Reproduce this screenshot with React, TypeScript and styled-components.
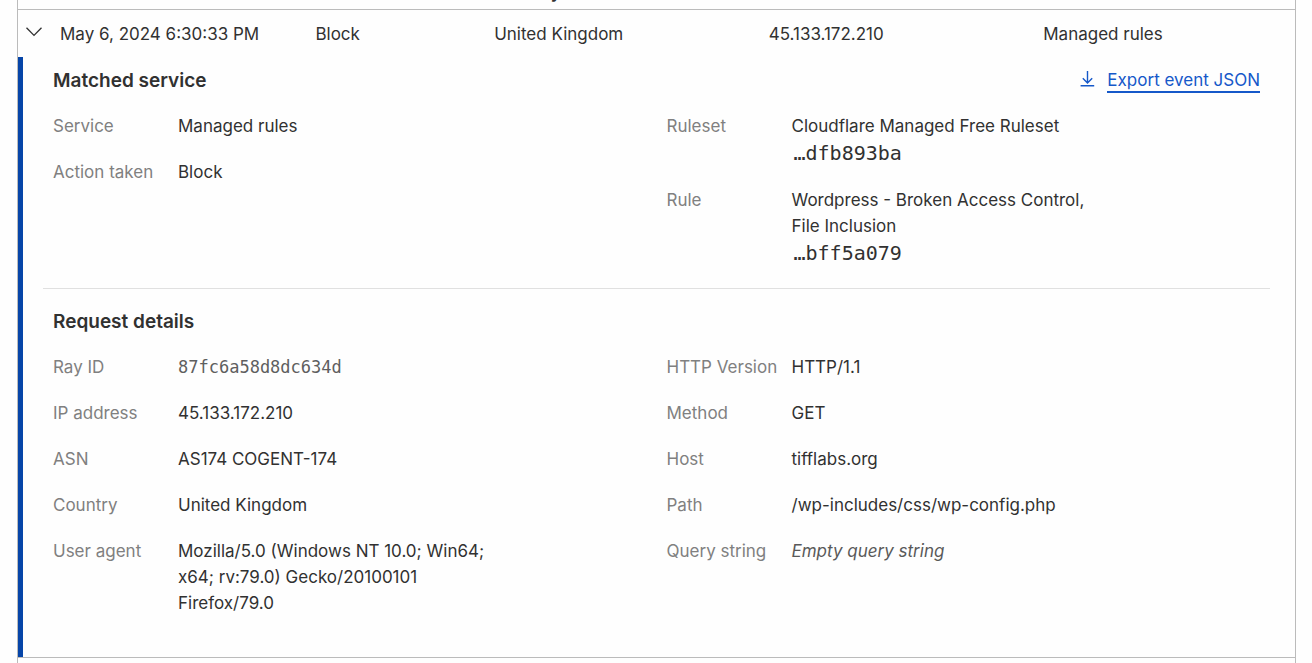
import React from "react";
import styled, { createGlobalStyle } from "styled-components";

const GlobalStyle = createGlobalStyle`
  *, *::before, *::after { box-sizing: border-box; }
  body {
    margin: 0;
    background: #fefefe;
    color: #313131;
    font-family: Inter, "Liberation Sans", sans-serif;
    font-size: 17px;
    line-height: 26px;
  }
`;

const Page = styled.main`
  display: flex;
  min-height: 100vh;
  padding: 0 16px 0 17px;
`;

const Panel = styled.div`
  flex: 1;
  border: solid #bbbbbb;
  border-width: 0 1px;
`;

const EventTable = styled.table`
  width: 100%;
  table-layout: fixed;
  border-collapse: separate;
  border-spacing: 0;
`;

const Column = styled.col<{ $width?: string }>`
  width: ${(p) => p.$width ?? "auto"};
`;

const HeadCell = styled.th`
  padding: 0;
  text-align: left;
  font-weight: 600;
  border-bottom: 1px solid #bbbbbb;
`;

const HeadLabel = styled.div`
  display: flex;
  align-items: flex-end;
  height: 9px;
  padding-bottom: 4px;
  overflow: hidden;
`;

const Cell = styled.td`
  height: 47px;
  padding: 1px 0 0;
  vertical-align: middle;
`;

const Toggle = styled.button`
  display: flex;
  width: 32px;
  height: 34px;
  padding: 7px 8px;
  border: 0;
  background: none;
  color: inherit;
  cursor: pointer;
`;

const DetailCell = styled.td`
  padding: 0;
  border-bottom: 1px solid #bbbbbb;
`;

const Detail = styled.div`
  padding: 0 25px 0 20px;
  border-left: 5px solid #0645a8;
`;

const Section = styled.section<{ $last?: boolean }>`
  padding: ${(p) => (p.$last ? "19px 0 41px" : "10px 0 21px")};
  border-bottom: ${(p) => (p.$last ? "0" : "1px solid #e0e0e0")};
`;

const SectionHeader = styled.header`
  display: flex;
  justify-content: space-between;
  padding: 0 10px;
  margin-bottom: 18px;
`;

const Title = styled.h2`
  margin: 0;
  font-size: 19px;
  line-height: 28px;
  font-weight: 600;
`;

const ExportLink = styled.a`
  display: flex;
  align-items: flex-start;
  gap: 12px;
  color: #1558c9;
  text-decoration: none;

  svg { margin-top: 4px; }
  span { border-bottom: 2px solid currentColor; line-height: 22px; padding-top: 2px; }
`;

const Columns = styled.div`
  display: grid;
  grid-template-columns: 1fr 1fr;
`;

const Fields = styled.dl`
  display: flex;
  flex-direction: column;
  gap: 20px;
  margin: 0;
  padding: 0 10px;
`;

const Field = styled.div`
  display: grid;
  grid-template-columns: 125px minmax(0, 320px);
`;

const Label = styled.dt`
  color: #808080;
  white-space: nowrap;
`;

const Value = styled.dd`
  margin: 0;
`;

const Hash = styled.code`
  display: block;
  padding-left: 2px;
  font-family: "DejaVu Sans Mono", monospace;
  font-size: 20px;
  line-height: 28px;
`;

const RayId = styled.code`
  font-family: "DejaVu Sans Mono", monospace;
  font-size: 17px;
  color: #5f5f5f;
`;

const Empty = styled.em`
  color: #595959;
`;

type Item = [string, React.ReactNode];

const FieldList = ({ items }: { items: Item[] }) => (
  <Fields>
    {items.map(([label, value]) => (
      <Field key={label}>
        <Label>{label}</Label>
        <Value>{value}</Value>
      </Field>
    ))}
  </Fields>
);

const service: Item[] = [
  ["Service", "Managed rules"],
  ["Action taken", "Block"],
];

const rules: Item[] = [
  ["Ruleset", <>Cloudflare Managed Free Ruleset<Hash>…dfb893ba</Hash></>],
  ["Rule", <>Wordpress - Broken Access Control, File Inclusion<Hash>…bff5a079</Hash></>],
];

const client: Item[] = [
  ["Ray ID", <RayId>87fc6a58d8dc634d</RayId>],
  ["IP address", "45.133.172.210"],
  ["ASN", "AS174 COGENT-174"],
  ["Country", "United Kingdom"],
  ["User agent", "Mozilla/5.0 (Windows NT 10.0; Win64; x64; rv:79.0) Gecko/20100101 Firefox/79.0"],
];

const request: Item[] = [
  ["HTTP Version", "HTTP/1.1"],
  ["Method", "GET"],
  ["Host", "tifflabs.org"],
  ["Path", "/wp-includes/css/wp-config.php"],
  ["Query string", <Empty>Empty query string</Empty>],
];

const ChevronIcon = () => (
  <svg width="16" height="16" viewBox="0 0 16 16" fill="none" stroke="currentColor" strokeWidth="1.3" aria-hidden="true">
    <path d="M0.5 3.7 8 11.4 15.5 3.7" />
  </svg>
);

const DownloadIcon = () => (
  <svg width="15" height="16" viewBox="0 0 15 16" fill="none" stroke="currentColor" strokeWidth="1.4" aria-hidden="true">
    <path d="M7.5 0V11.6M2.8 7.2 7.5 11.9 12.2 7.2M0.6 14.8H14.2" />
  </svg>
);

export default function App() {
  return (
    <>
      <GlobalStyle />
      <Page>
        <Panel>
          <EventTable>
            <colgroup>
              <Column $width="42px" />
              <Column $width="20%" />
              <Column $width="14%" />
              <Column $width="21.5%" />
              <Column $width="21.5%" />
              <Column />
            </colgroup>
            <thead>
              <tr>
                <HeadCell colSpan={3} />
                <HeadCell scope="col"><HeadLabel>Country</HeadLabel></HeadCell>
                <HeadCell colSpan={2} />
              </tr>
            </thead>
            <tbody>
              <tr>
                <Cell>
                  <Toggle type="button" aria-expanded="true" aria-label="Toggle event details">
                    <ChevronIcon />
                  </Toggle>
                </Cell>
                <Cell>May 6, 2024 6:30:33 PM</Cell>
                <Cell>Block</Cell>
                <Cell>United Kingdom</Cell>
                <Cell>45.133.172.210</Cell>
                <Cell>Managed rules</Cell>
              </tr>
              <tr>
                <DetailCell colSpan={6}>
                  <Detail>
                    <Section>
                      <SectionHeader>
                        <Title>Matched service</Title>
                        <ExportLink href="#export">
                          <DownloadIcon />
                          <span>Export event JSON</span>
                        </ExportLink>
                      </SectionHeader>
                      <Columns>
                        <FieldList items={service} />
                        <FieldList items={rules} />
                      </Columns>
                    </Section>
                    <Section $last>
                      <SectionHeader>
                        <Title>Request details</Title>
                      </SectionHeader>
                      <Columns>
                        <FieldList items={client} />
                        <FieldList items={request} />
                      </Columns>
                    </Section>
                  </Detail>
                </DetailCell>
              </tr>
            </tbody>
          </EventTable>
        </Panel>
      </Page>
    </>
  );
}
